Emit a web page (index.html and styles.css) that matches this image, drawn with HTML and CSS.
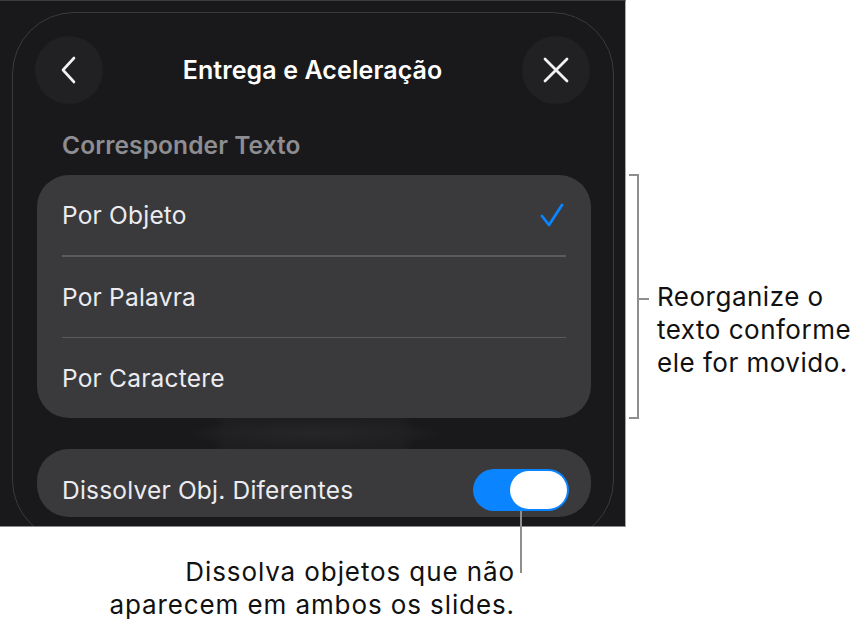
FILE: index.html
```html
<!DOCTYPE html>
<html lang="pt">
<head>
<meta charset="utf-8">
<link rel="stylesheet" href="styles.css">
</head>
<body>
<div class="page">
  <div class="top">
    <div class="panel">
      <div class="outline"></div>
      <div class="nav">
        <div class="circle-btn">
          <svg width="24" height="30" viewBox="0 0 24 30"><path d="M17 3 L6 15 L17 27" fill="none" stroke="#f2f2f2" stroke-width="2.6" stroke-linecap="round" stroke-linejoin="round"/></svg>
        </div>
        <div class="title">Entrega e Aceleração</div>
        <div class="circle-btn">
          <svg width="30" height="30" viewBox="0 0 30 30"><path d="M4 4 L26 26 M26 4 L4 26" fill="none" stroke="#f2f2f2" stroke-width="2.8" stroke-linecap="round"/></svg>
        </div>
      </div>
      <div class="section-label">Corresponder Texto</div>
      <div class="card list">
        <div class="row"><span>Por Objeto</span>
          <svg class="check" width="26" height="26" viewBox="0 0 26 26"><path d="M3 14 L10 23 L23 3" fill="none" stroke="#0a84ff" stroke-width="2.8" stroke-linecap="round" stroke-linejoin="round"/></svg>
        </div>
        <div class="sep"></div>
        <div class="row"><span>Por Palavra</span></div>
        <div class="sep"></div>
        <div class="row"><span>Por Caractere</span></div>
      </div>
      <div class="band"></div>
      <div class="card toggle-card">
        <span>Dissolver Obj. Diferentes</span>
        <div class="switch"><div class="knob"></div></div>
      </div>
    </div>
    <div class="callout-right">
      <div class="bracket"><div class="tick"></div></div>
      <div class="callout-text side">Reorganize o<br>texto conforme<br>ele for movido.</div>
    </div>
  </div>
  <div class="callout-bottom">
    <div class="leader"></div>
    <div class="callout-text right">Dissolva objetos que não<br>aparecem em ambos os slides.</div>
  </div>
</div>
</body>
</html>
```
FILE: styles.css
```css
html, body {
  margin: 0;
  padding: 0;
  background: #ffffff;
}
.page {
  position: relative;
  width: 865px;
  height: 625px;
  overflow: hidden;
  font-family: "Inter", "Liberation Sans", sans-serif;
}
.top {
  display: flex;
  align-items: flex-start;
}
.panel {
  position: relative;
  width: 626px;
  height: 527px;
  background: #19191b;
  border-top: 1px solid #3c3c3e;
  border-right: 1px solid #a8a8a8;
  border-bottom: 1px solid #8a8a8a;
  box-sizing: border-box;
  overflow: hidden;
  display: flex;
  flex-direction: column;
  padding: 35px 35px 0 37px;
}
.outline {
  position: absolute;
  left: 12px;
  top: 11px;
  width: 602px;
  height: 530px;
  border: 1.5px solid #3a3a3d;
  border-radius: 62px;
  box-sizing: border-box;
  pointer-events: none;
}
.nav {
  position: relative;
  display: flex;
  align-items: center;
  justify-content: space-between;
  height: 68px;
  margin-left: -2px;
}
.circle-btn {
  width: 68px;
  height: 68px;
  border-radius: 50%;
  background: #212123;
  display: flex;
  align-items: center;
  justify-content: center;
}
.title {
  color: #ffffff;
  font-size: 25px;
  font-weight: 600;
  letter-spacing: 0.1px;
}
.section-label {
  position: relative;
  color: #8d8d92;
  font-size: 24.5px;
  font-weight: 600;
  margin: 29px 0 0 25px;
  line-height: 24px;
  height: 24px;
  letter-spacing: 0.1px;
}
.card {
  position: relative;
  background: #3a3a3c;
  border-radius: 32px;
  width: 554px;
}
.list {
  margin-top: 18px;
  height: 243px;
  display: flex;
  flex-direction: column;
}
.row {
  height: 80px;
  display: flex;
  align-items: center;
  justify-content: space-between;
  padding: 0 25px;
  color: #ececf0;
  font-size: 24.5px;
  letter-spacing: 0.2px;
}
.sep {
  height: 1.5px;
  background: #5a5a5e;
  margin: 0 25px;
}
.check {
  margin-right: 1px;
}
.band {
  position: relative;
  height: 31px;
  margin: 0 -37px;
  background: radial-gradient(ellipse 130px 14px at 50% 50%, #262628 0%, #212123 60%, rgba(33,33,35,0) 100%),
              linear-gradient(90deg, rgba(30,30,32,0) 0%, rgba(30,30,32,0) 34%, #1e1e20 36%, #1e1e20 64%, rgba(30,30,32,0) 66%, rgba(30,30,32,0) 100%);
}
.toggle-card {
  height: 68px;
  display: flex;
  align-items: center;
  justify-content: space-between;
  padding: 14px 22px 0 25px;
  box-sizing: border-box;
  color: #ececf0;
  font-size: 24.5px;
  letter-spacing: 0.2px;
}
.switch {
  width: 96px;
  height: 42px;
  border-radius: 21px;
  background: #0a84ff;
  display: flex;
  align-items: center;
  justify-content: flex-end;
  padding-right: 2px;
  box-sizing: border-box;
}
.knob {
  width: 57px;
  height: 38px;
  border-radius: 19px;
  background: #ffffff;
}
.callout-right {
  display: flex;
  align-items: flex-start;
  margin-top: 174px;
  margin-left: 3px;
}
.bracket {
  position: relative;
  width: 10px;
  height: 245px;
  border: 2px solid #8e8e8e;
  border-left: none;
  box-sizing: border-box;
}
.tick {
  position: absolute;
  left: 8px;
  top: 122px;
  width: 12px;
  height: 2px;
  background: #8e8e8e;
}
.callout-text {
  color: #111111;
  font-size: 26px;
  line-height: 33px;
}
.callout-text.side {
  margin-left: 18px;
  margin-top: 106px;
  white-space: nowrap;
  letter-spacing: 0.5px;
}
.callout-bottom {
  position: relative;
  padding-top: 28px;
  width: 515px;
}
.callout-text.right {
  text-align: right;
  width: 515px;
  letter-spacing: 0.9px;
  white-space: nowrap;
}
.leader {
  position: absolute;
  left: 520px;
  top: -16px;
  width: 2px;
  height: 62px;
  background: #8e8e8e;
}
```
